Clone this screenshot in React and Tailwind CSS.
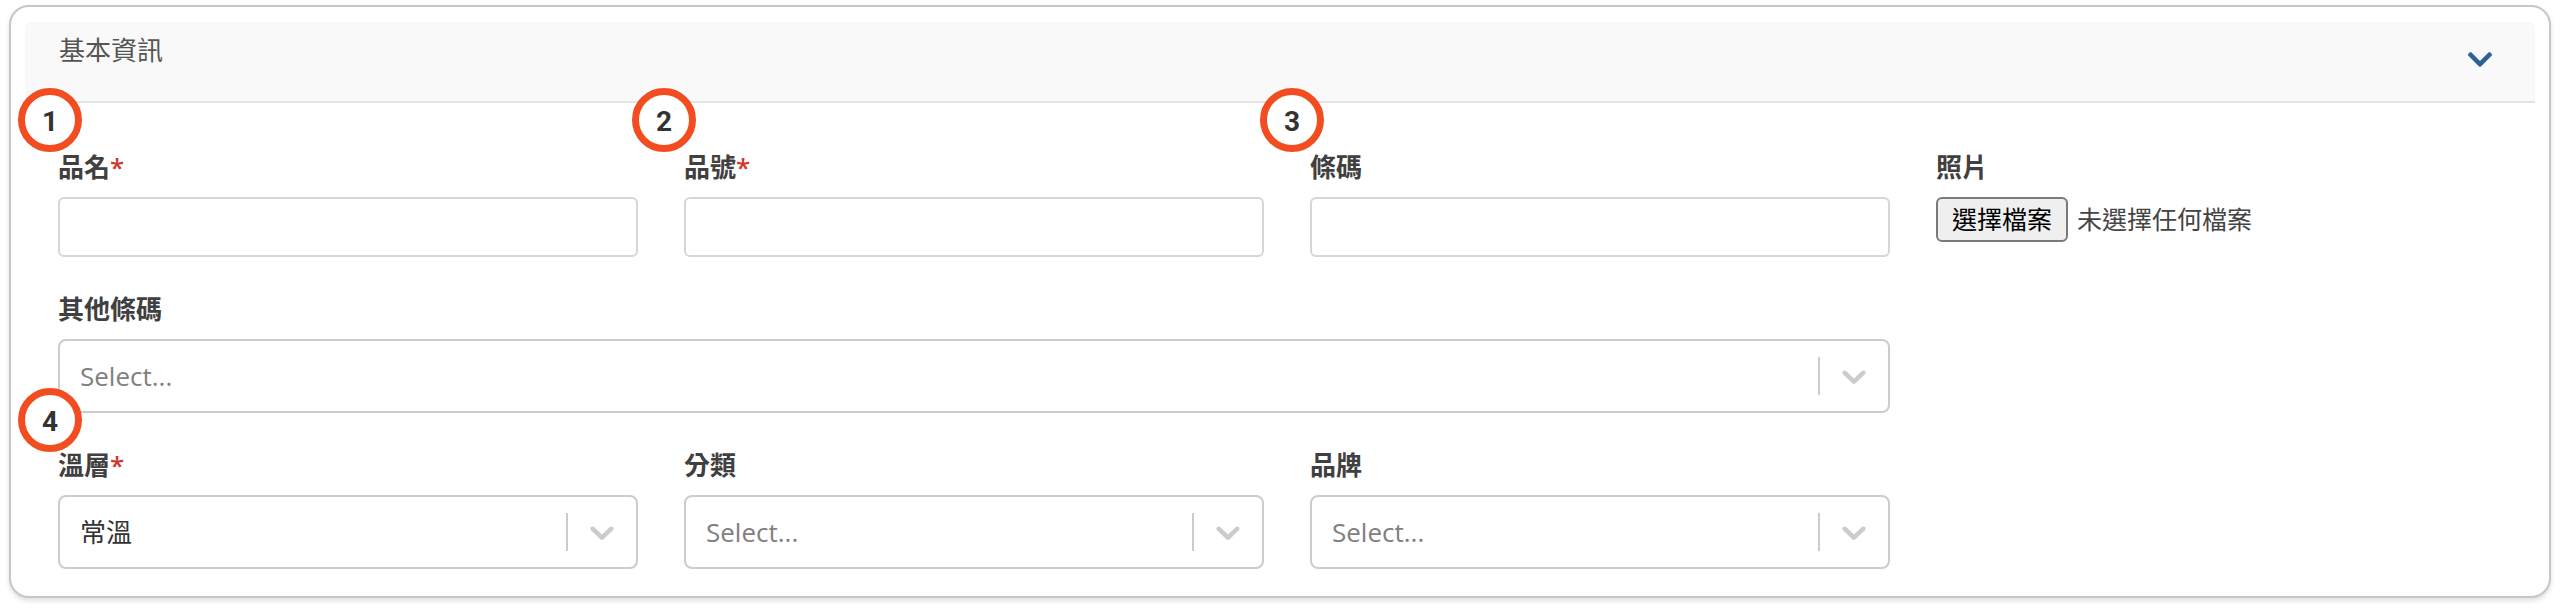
import React from "react";

const FONT = { fontFamily: '"Open Sans", "Noto Sans CJK TC", sans-serif' };

function SelectChevron() {
  return (
    <svg width="40" height="40" viewBox="0 0 20 20" fill="#cccccc" aria-hidden="true">
      <path d="M4.516 7.548c0.436-0.446 1.043-0.481 1.576 0l3.908 3.747 3.908-3.747c0.533-0.481 1.141-0.446 1.574 0 0.436 0.445 0.408 1.197 0 1.615-0.406 0.418-4.695 4.502-4.695 4.502-0.217 0.223-0.502 0.335-0.787 0.335s-0.57-0.112-0.789-0.335c0 0-4.287-4.084-4.695-4.502s-0.436-1.17 0-1.615z" />
    </svg>
  );
}

function HeaderChevron() {
  return (
    <svg width="24" height="15" viewBox="5 123 438 266" fill="#2d6094" aria-hidden="true">
      <path d="M207.029 381.476L12.686 187.132c-9.373-9.373-9.373-24.569 0-33.941l22.667-22.667c9.357-9.357 24.522-9.375 33.901-.04L224 284.505l154.745-154.021c9.379-9.335 24.544-9.317 33.901.04l22.667 22.667c9.373 9.373 9.373 24.569 0 33.941L240.971 381.476c-9.373 9.372-24.569 9.372-33.942 0z" />
    </svg>
  );
}

function Label({ children, required }) {
  return (
    <div className="mb-[12px] h-[36px] text-[26px] leading-[36px] font-semibold text-[#404040]">
      {children}
      {required && <span className="text-[#cf3a2e]">*</span>}
    </div>
  );
}

function TextInput() {
  return <div className="h-[60px] rounded-[6px] border-2 border-[#d6d6d6] bg-white" />;
}

function Select({ value, placeholder = "Select..." }) {
  return (
    <div className="flex h-[74px] items-stretch rounded-[8px] border-2 border-[#cccccc] bg-white">
      <div className="flex flex-1 items-center pl-[20px] text-[26px]">
        {value ? (
          <span className="text-[#333333]">{value}</span>
        ) : (
          <span className="text-[#808080]">{placeholder}</span>
        )}
      </div>
      <div className="flex items-stretch">
        <span className="my-[16px] w-[2px] bg-[#cccccc]" />
        <div className="flex items-center px-[14px]">
          <SelectChevron />
        </div>
      </div>
    </div>
  );
}

function Badge({ n, className }) {
  return (
    <div
      className={
        "absolute flex h-[64px] w-[64px] items-center justify-center rounded-full border-[7px] border-[#f24d21] bg-white " +
        className
      }
    >
      <span
        className="pt-[4px] text-[28px] font-bold leading-none text-[#333333]"
        style={{ fontFamily: 'Roboto, "Liberation Sans", sans-serif' }}
      >
        {n}
      </span>
    </div>
  );
}

export default function App() {
  return (
    <div className="relative h-[612px] w-[2560px] bg-white pl-[9px] pr-[9px] pt-[5px]" style={FONT}>
      <div className="rounded-[20px] border-2 border-[#c6c6c6] bg-white px-[14px] pt-[15px] pb-[27px] shadow-[0_3px_5px_rgba(0,0,0,0.12)]">
        {/* Header */}
        <div className="flex h-[81px] items-start justify-between rounded-t-[6px] border-b-2 border-[#e4e4e4] bg-[#f9f9f9] pl-[34px] pr-[43px]">
          <div className="pt-[10px] text-[26px] leading-[36px] text-[#555555]">基本資訊</div>
          <div className="pt-[30px]">
            <HeaderChevron />
          </div>
        </div>

        {/* Body */}
        <div className="grid grid-cols-4 gap-x-[46px] gap-y-[34px] pl-[33px] pr-[19px] pt-[46px]">
          <div>
            <Label required>品名</Label>
            <TextInput />
          </div>
          <div>
            <Label required>品號</Label>
            <TextInput />
          </div>
          <div>
            <Label>條碼</Label>
            <TextInput />
          </div>
          <div>
            <Label>照片</Label>
            <div className="flex items-center">
              <div className="flex h-[45px] w-[132px] items-center justify-center rounded-[6px] border-2 border-[#7a7a7a] bg-[#efefef] text-[25px] text-black">
                選擇檔案
              </div>
              <span className="ml-[9px] text-[25px] text-[#444444]">未選擇任何檔案</span>
            </div>
          </div>

          <div className="col-span-3">
            <Label>其他條碼</Label>
            <Select />
          </div>
          <div />

          <div>
            <Label required>溫層</Label>
            <Select value="常溫" />
          </div>
          <div>
            <Label>分類</Label>
            <Select />
          </div>
          <div>
            <Label>品牌</Label>
            <Select />
          </div>
          <div />
        </div>
      </div>

      <Badge n="1" className="left-[18px] top-[88px]" />
      <Badge n="2" className="left-[632px] top-[88px]" />
      <Badge n="3" className="left-[1260px] top-[88px]" />
      <Badge n="4" className="left-[18px] top-[388px]" />
    </div>
  );
}
